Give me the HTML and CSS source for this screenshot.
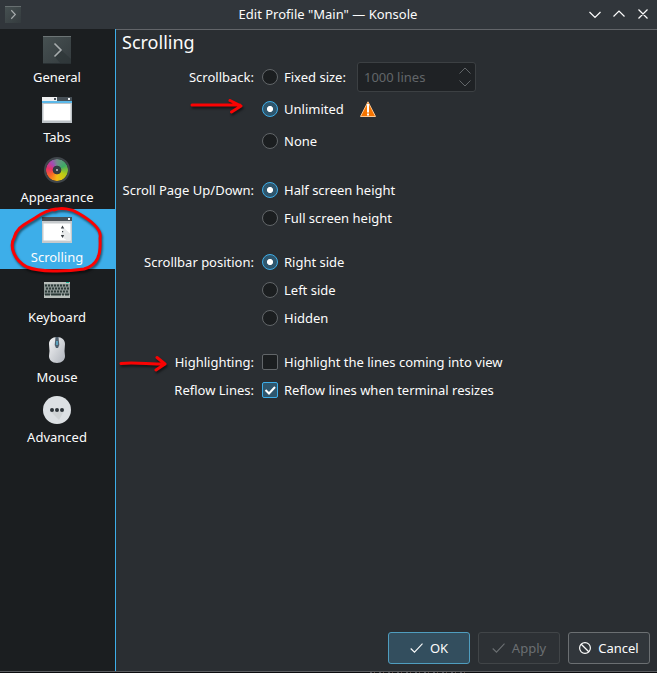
FILE: index.html
```html
<!DOCTYPE html>
<html lang="en">
<head>
<meta charset="utf-8">
<title>Edit Profile "Main" — Konsole</title>
<link rel="stylesheet" href="styles.css">
</head>
<body>
<div class="window">
  <header class="titlebar">
    <svg class="app-icon" width="16" height="17" viewBox="0 0 28 28" preserveAspectRatio="none"><defs><linearGradient id="term" x1="0" y1="0" x2="1" y2="1"><stop offset="0" stop-color="#475152"/><stop offset="1" stop-color="#343b3e"/></linearGradient></defs><path fill="url(#term)" d="M0 0h28v28H0z"/><path fill="#6c7475" d="M0 0h28v1.5H0z"/><path d="M11 7l7 7-7 7" fill="none" stroke="#a8adae" stroke-width="2"/></svg>
    <div class="title">Edit Profile "Main" — Konsole</div>
    <svg class="controls" width="60" height="14" viewBox="0 0 60 14" fill="none" stroke="#fcfcfc" stroke-width="1.2"><path d="M1.5 5L7 10.500L12.500 5M25.500 9.500L31 4L36.500 9.500M50.500 2.500l9 9m0-9l-9 9"/></svg>
  </header>
  <div class="body">
    <nav class="sidebar">
      <div class="item"><svg width="28" height="28" viewBox="0 0 28 28"><path fill="url(#term)" d="M0 0h28v28H0z"/><path fill="#2c3336" opacity=".6" d="M18 14l10 9v5H18l-7-8z"/><path fill="#6c7475" d="M0 0h28v1H0z"/><path fill="#293033" d="M0 27h28v1H0z"/><path d="M11.500 7.500l6.500 6.500-6.500 6.500" fill="none" stroke="#a8adae" stroke-width="1.600"/></svg><span>General</span></div>
      <div class="item"><svg width="30" height="28" viewBox="0 0 30 28"><path fill="#bdc3c7" d="M0 1h30v26H0z"/><path fill="#475057" d="M0 1h30v4H0z"/><path fill="#eff0f1" d="M0 1h15v4H0z"/><path fill="#475057" d="M12 2h2v2h-2z"/><path fill="#eff0f1" d="M26 2h2v2h-2z"/><path fill="#5cb8e8" d="M0 5h30v2H0z"/><path fill="#fff" d="M1.500 8h27v16.500h-27z"/></svg><span>Tabs</span></div>
      <div class="item"><span class="wheel"></span><span>Appearance</span></div>
      <div class="item selected"><svg width="30" height="28" viewBox="0 0 30 28"><path fill="#c6cacd" d="M0 1h30v26H0z"/><path fill="#475057" d="M0 1h30v4H0z"/><path fill="#fff" d="M26 2h2v2h-2zM1.500 7.500h27v17h-27z"/><path fill="#e9ebec" d="M21 11l7.500 7v6.500H25L19 20z"/><path fill="#3b4045" d="M20.500 9.500l1.700 3h-3.400zM20 15h1.200v1.200H20zM18.800 19h3.400l-1.700 3z"/></svg><span>Scrolling</span></div>
      <div class="item"><svg width="26" height="28" viewBox="0 0 26 28"><path fill="#b9bfbb" d="M0 6h26v16H0z"/><path fill="#8b9592" d="M0 8h26v11H0z"/><path d="M1 9.500h24M2 12.500h23M1 15.500h24" stroke="#2c3b38" stroke-width="2" stroke-dasharray="2 1"/><path d="M1 18.500h5m1 0h10m1 0h2m1 0h4" stroke="#2c3b38" stroke-width="2"/><path fill="#1abc9c" d="M22 6h3v1h-3z"/></svg><span>Keyboard</span></div>
      <div class="item"><svg width="18" height="28" viewBox="0 0 18 28"><defs><linearGradient id="mouse" x1="0" y1="0" x2="1" y2="1"><stop offset="0" stop-color="#f4f5f6"/><stop offset="1" stop-color="#aeb3bb"/></linearGradient></defs><path fill="url(#mouse)" d="M9 1c5 0 8 3 8 7l-.5 7 .5 5c0 4-3 7-8 7s-8-3-8-7l.5-5L1 8c0-4 3-7 8-7z"/><path fill="#50606e" d="M7.500 1h3l.8 8-1.300 3H8L6.700 9z"/><path fill="#5ba0bc" d="M8 5h2v4H8z"/></svg><span>Mouse</span></div>
      <div class="item"><svg width="28" height="28" viewBox="0 0 28 28"><circle cx="14" cy="14" r="14" fill="#dce0e3"/><path fill="#cfd3d5" d="M7 15l9 9 5-9z"/><g fill="#2d3439"><circle cx="9" cy="14" r="2"/><circle cx="14" cy="14" r="2"/><circle cx="19" cy="14" r="2"/></g></svg><span>Advanced</span></div>
    </nav>
    <main class="page">
      <h1>Scrolling</h1>
      <div class="form">
        <div class="row tall"><span class="label">Scrollback:</span><i class="radio"></i><span class="fixed">Fixed size:</span><div class="spin"><span>1000 lines</span><svg width="12" height="20" viewBox="0 0 12 20" fill="none" stroke="#626669"><path d="M.5 6.500L6 1l5.500 5.500M.5 13.500L6 19l5.500-5.500"/></svg></div></div>
        <div class="row tall"><span class="label"></span><i class="radio on"></i><span>Unlimited</span><svg class="warn" width="16" height="16" viewBox="0 0 16 16"><path fill="#f67400" stroke="#ffc891" d="M8 .8L15.500 15.500H.5z"/><path fill="#fff" d="M7 3h2v8.500H7zM7 12.500h2v2H7z"/></svg></div>
        <div class="row tall"><span class="label"></span><i class="radio"></i><span>None</span></div>
        <div class="row page-step"><span class="label">Scroll Page Up/Down:</span><i class="radio on"></i><span>Half screen height</span></div>
        <div class="row"><span class="label"></span><i class="radio"></i><span>Full screen height</span></div>
        <div class="row group"><span class="label">Scrollbar position:</span><i class="radio on"></i><span>Right side</span></div>
        <div class="row"><span class="label"></span><i class="radio"></i><span>Left side</span></div>
        <div class="row"><span class="label"></span><i class="radio"></i><span>Hidden</span></div>
        <div class="row group"><span class="label">Highlighting:</span><i class="check"></i><span>Highlight the lines coming into view</span></div>
        <div class="row"><span class="label">Reflow Lines:</span><i class="check on"><svg width="14" height="14" viewBox="0 0 14 14" fill="none" stroke="#fff" stroke-width="2"><path d="M2.500 7l3.500 3.500L12 4"/></svg></i><span>Reflow lines when terminal resizes</span></div>
      </div>
      <footer class="buttons">
        <div class="button primary"><svg width="13" height="12" viewBox="0 0 13 12" fill="none" stroke="currentColor" stroke-width="1.100"><path d="M.7 6.500L4.500 10.200l8-8.500"/></svg>OK</div>
        <div class="button disabled"><svg width="13" height="12" viewBox="0 0 13 12" fill="none" stroke="currentColor" stroke-width="1.100"><path d="M.7 6.500L4.500 10.200l8-8.500"/></svg>Apply</div>
        <div class="button"><svg width="12" height="12" viewBox="0 0 12 12" fill="none" stroke="currentColor" stroke-width="1.200"><circle cx="6" cy="6" r="5.400"/><path d="M2 2l8 8"/></svg>Cancel</div>
      </footer>
    </main>
  </div>
  <div class="backdrop"></div>
  <svg class="marks" width="657" height="673" viewBox="0 0 657 673"><path d="M192 105H240M230 100.500L241 106L231.500 112M121 363.500C132 362 148 364 164 364M157 357.500L165 364L156 370M54 210C61 207 72 209 78 213C92 221 102 230 100 238C101 255 98 265 84 269C65 272 39 272 27 267C15 261 9 247 14 238C17 227 24 225 35 218C42 213 48 210 56 209"/></svg>
</div>
</body>
</html>
```
FILE: styles.css
```css
* { box-sizing: border-box; }
body { margin: 0; background: #0b0c0e; color: #fcfcfc; font: 13px/18px "Noto Sans", sans-serif; }
svg { display: block; flex: none; }
.window { position: relative; width: 657px; height: 673px; display: flex; flex-direction: column; overflow: hidden; }
.titlebar { height: 29px; flex: none; display: grid; grid-template-columns: 60px 1fr 69px; align-items: center; background: #31363b; padding-bottom: 1px; }
.app-icon { margin: 0 0 0 5px; }
.title { text-align: center; padding-left: 8px; }
.body { height: 643px; flex: none; display: flex; border-bottom: 1px solid #5b5e61; }
.sidebar { width: 116px; flex: none; background: #1b1e20; border-right: 1px solid #3daee9; }
.item { height: 60px; display: flex; flex-direction: column; align-items: center; padding: 7px 1px 0 0; gap: 4px; }
.selected { background: #3daee9; }
.wheel { width: 26px; height: 26px; margin: 1px; border: 2px solid #40464b; border-radius: 50%; background: radial-gradient(circle, #a7a9aa 0 .7px, #343b40 1.300px 4px, transparent 4.700px), conic-gradient(#718d8a, #3caa65 60deg, #b7cc15 120deg, #f4bc14 180deg, #f86925 230deg, #e72f67 280deg, #a34bb5 325deg, #718d8a) padding-box; }
.page { flex: 1; display: flex; flex-direction: column; background: #2a2e32; border-top: 1px solid #626569; }
h1 { margin: 0; padding: 0 6px; font-size: 18px; line-height: 25px; font-weight: 400; height: 31px; }
.row { height: 28px; display: flex; align-items: center; white-space: nowrap; }
.tall { height: 32px; }
.page-step { margin-top: 19px; }
.group { margin-top: 16px; }
.label { width: 138px; margin-right: 8px; text-align: right; flex: none; }
.radio, .check { width: 16px; height: 16px; flex: none; margin-right: 6px; border: 1px solid #626669; background: #1b1e20; }
.radio { border-radius: 50%; }
.check { border-radius: 2px; }
.on { border-color: #3daee9; background: #2f566d; }
.radio.on { background: radial-gradient(circle, #fff 0 2.700px, #2f566d 3.400px); }
.fixed { width: 62px; }
.spin { width: 119px; height: 30px; margin-left: 11px; padding: 0 4px 0 6px; display: flex; align-items: center; justify-content: space-between; border: 1px solid #3c4043; border-radius: 3px; background: #1f2225; color: #626669; }
.warn { margin-left: 16px; }
.buttons { margin-top: auto; padding: 0 7px 7px; display: flex; justify-content: flex-end; gap: 8px; }
.button { width: 82px; height: 32px; display: flex; align-items: center; justify-content: center; gap: 7px; border: 1px solid #6b6f72; border-radius: 3px; background: #31363b; }
.primary { background: #334e5e; border-color: #4f9dbf; }
.disabled { background: #2d3135; border-color: #414548; color: #6b6f72; }
.backdrop { height: 1px; width: 98px; margin-left: 370px; background: repeating-linear-gradient(90deg, #4a4a50 0 2px, #0b0c0e 2px 4px, #55423c 4px 5px, #0b0c0e 5px 9px); }
.marks { position: absolute; inset: 0; fill: none; stroke: #fa0303; stroke-width: 3; stroke-linecap: round; stroke-linejoin: round; filter: drop-shadow(1px 2px 1px #0008); pointer-events: none; }
```
